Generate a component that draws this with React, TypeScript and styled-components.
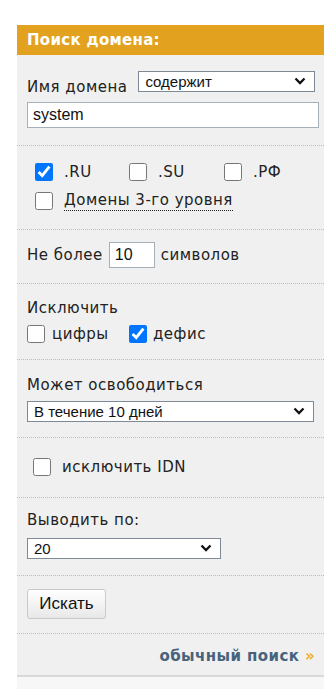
import styled, { createGlobalStyle } from "styled-components";

const GlobalStyle = createGlobalStyle`
  html, body {
    margin: 0;
    padding: 0;
    background: #fff;
  }
  body {
    font-family: "DejaVu Sans", Verdana, sans-serif;
    color: #222;
  }
`;

const Panel = styled.div`
  width: 307px;
  margin: 25px 0 0 17px;
  background: #f0f0f0;
`;

const Header = styled.div`
  height: 30px;
  background: #e2a21f;
  color: #fff;
  font-weight: bold;
  font-size: 15px;
  letter-spacing: 0.3px;
  line-height: 30px;
  padding-left: 10px;
`;

const Block = styled.div<{ $pt: number; $pb: number }>`
  padding: ${(p) => p.$pt}px 5px ${(p) => p.$pb}px 10px;
  border-bottom: 1px dotted #bcbcbc;
  font-size: 15px;
  letter-spacing: 0.5px;
`;

const Row = styled.div<{ $gap?: number; $mt?: number; $h?: number; $top?: boolean }>`
  display: flex;
  align-items: ${(p) => (p.$top ? "flex-start" : "center")};
  gap: ${(p) => p.$gap ?? 0}px;
  margin-top: ${(p) => p.$mt ?? 0}px;
  height: ${(p) => (p.$h ? `${p.$h}px` : "auto")};
`;

const Label = styled.div<{ $mt?: number }>`
  line-height: 18px;
  margin-top: ${(p) => p.$mt ?? 0}px;
`;

const TextInput = styled.input<{ $w?: number }>`
  box-sizing: border-box;
  width: ${(p) => (p.$w ? `${p.$w}px` : "100%")};
  height: 26px;
  border: 1px solid #a6b0b9;
  background: #fff;
  font-family: "Liberation Sans", Arial, sans-serif;
  font-size: 16px;
  letter-spacing: 0;
  color: #111;
  padding: 0 5px;
  margin: 0;
  outline: none;
`;

const SelectWrap = styled.div<{ $w: number }>`
  position: relative;
  width: ${(p) => p.$w}px;
  height: 21px;
`;

const Select = styled.select`
  appearance: none;
  box-sizing: border-box;
  width: 100%;
  height: 100%;
  border: 1px solid #7d8a96;
  border-radius: 0;
  background: #fff;
  font-family: "Liberation Sans", Arial, sans-serif;
  font-size: 15px;
  letter-spacing: 0;
  color: #111;
  padding: 0 6px;
  margin: 0;
  outline: none;
`;

const Chevron = styled.svg`
  position: absolute;
  right: 9px;
  top: 6px;
  width: 12px;
  height: 8px;
  pointer-events: none;
`;

const Check = styled.label<{ $w?: number; $ml?: number; $lg?: number }>`
  display: flex;
  align-items: center;
  width: ${(p) => (p.$w ? `${p.$w}px` : "auto")};
  margin-left: ${(p) => p.$ml ?? 0}px;
  gap: ${(p) => p.$lg ?? 11}px;
  line-height: 18px;

  input {
    width: 18px;
    height: 18px;
    margin: 0;
    flex: none;
  }
`;

const Dotted = styled.span`
  border-bottom: 1px dotted #222;
  padding-bottom: 1px;
`;

const Button = styled.button`
  display: block;
  width: 79px;
  height: 30px;
  border: 1px solid #c9c9c9;
  border-radius: 3px;
  background: linear-gradient(#ffffff, #e8e8e8);
  font-family: "Liberation Sans", Arial, sans-serif;
  font-size: 17px;
  letter-spacing: 0;
  color: #111;
  padding: 0;
`;

const LinkRow = styled.div`
  display: flex;
  justify-content: flex-end;
  padding: 13px 9px 10px 10px;
  border-bottom: 2px solid #d8d8d8;
`;

const Link = styled.a`
  font-weight: bold;
  font-size: 15px;
  letter-spacing: 0.4px;
  line-height: 18px;
  color: #47637c;
  text-decoration: none;
  span {
    color: #e8b02a;
  }
`;

const Footer = styled.div`
  height: 12px;
  background: #f7f7f7;
`;

const ChevronIcon = () => (
  <Chevron viewBox="0 0 12 8">
    <path d="M1.5 1.5 L6 6 L10.5 1.5" fill="none" stroke="#111" strokeWidth="2.3" />
  </Chevron>
);

const Dropdown = ({ w, value }: { w: number; value: string }) => (
  <SelectWrap $w={w}>
    <Select defaultValue={value}>
      <option>{value}</option>
    </Select>
    <ChevronIcon />
  </SelectWrap>
);

export default function App() {
  return (
    <>
      <GlobalStyle />
      <Panel>
        <Header>Поиск домена:</Header>

        <Block $pt={16} $pb={17}>
          <Row $gap={11} $top>
            <Label $mt={7}>Имя домена</Label>
            <Dropdown w={177} value="содержит" />
          </Row>
          <Row $mt={6}>
            <TextInput defaultValue="system" />
          </Row>
        </Block>

        <Block $pt={14} $pb={16}>
          <Row $h={24}>
            <Check $w={94} $ml={8}>
              <input type="checkbox" defaultChecked />
              .RU
            </Check>
            <Check $w={95}>
              <input type="checkbox" />
              .SU
            </Check>
            <Check>
              <input type="checkbox" />
              .РФ
            </Check>
          </Row>
          <Row $h={24} $mt={5}>
            <Check $ml={8}>
              <input type="checkbox" />
              <Dotted>Домены 3-го уровня</Dotted>
            </Check>
          </Row>
        </Block>

        <Block $pt={12} $pb={15}>
          <Row $gap={6}>
            <Label>Не более</Label>
            <TextInput $w={46} defaultValue="10" />
            <Label>символов</Label>
          </Row>
        </Block>

        <Block $pt={15} $pb={14}>
          <Label>Исключить</Label>
          <Row $h={22} $mt={6}>
            <Check $w={102} $lg={7}>
              <input type="checkbox" />
              цифры
            </Check>
            <Check $lg={6}>
              <input type="checkbox" defaultChecked />
              дефис
            </Check>
          </Row>
        </Block>

        <Block $pt={16} $pb={15}>
          <Label>Может освободиться</Label>
          <Row $mt={7}>
            <Dropdown w={287} value="В течение 10 дней" />
          </Row>
        </Block>

        <Block $pt={17} $pb={18}>
          <Row $h={24}>
            <Check $ml={6}>
              <input type="checkbox" />
              исключить IDN
            </Check>
          </Row>
        </Block>

        <Block $pt={13} $pb={16}>
          <Label>Выводить по:</Label>
          <Row $mt={9}>
            <Dropdown w={194} value="20" />
          </Row>
        </Block>

        <Block $pt={13} $pb={14}>
          <Button>Искать</Button>
        </Block>

        <LinkRow>
          <Link href="#">
            обычный поиск <span>»</span>
          </Link>
        </LinkRow>
        <Footer />
      </Panel>
    </>
  );
}
